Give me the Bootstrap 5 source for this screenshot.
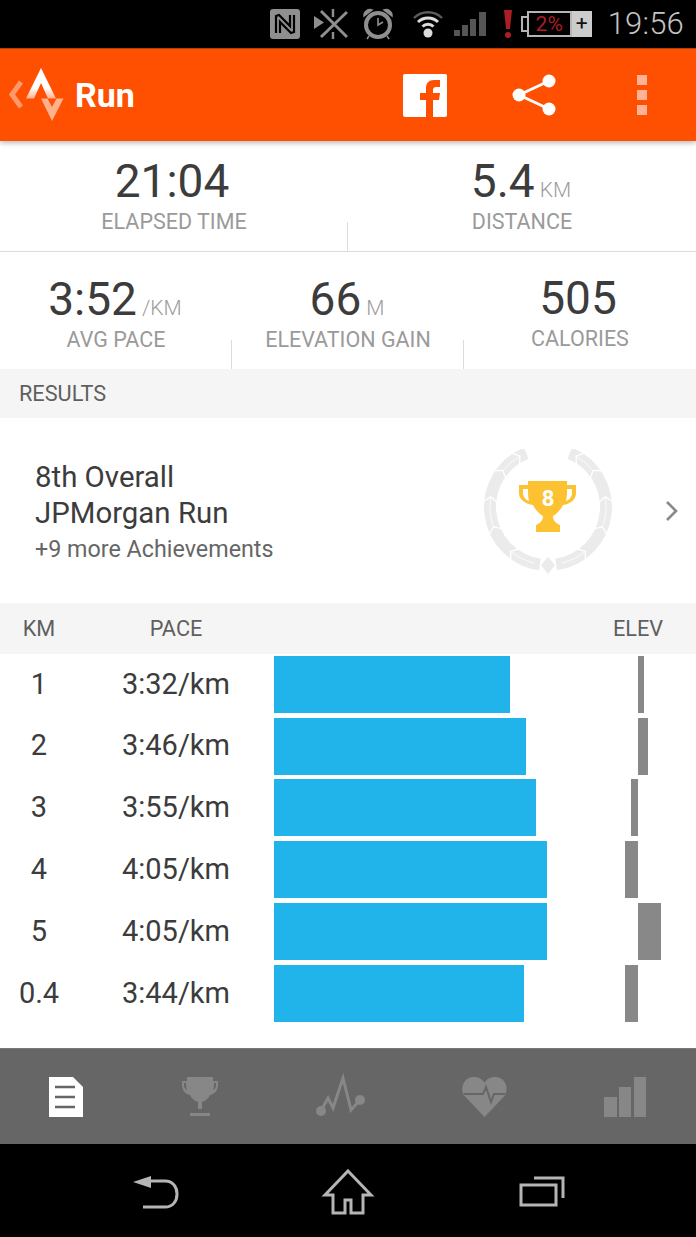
<!DOCTYPE html>
<html lang="en">
<head>
<meta charset="utf-8">
<title>Run</title>
<link rel="stylesheet" href="https://cdn.jsdelivr.net/npm/bootstrap@5.3.0/dist/css/bootstrap.min.css">
<style>
html,body{margin:0;background:#fff}
body{width:696px;height:1237px;overflow:hidden;font-family:Roboto,"Liberation Sans",sans-serif;color:#3c3c3c}
svg{display:block;flex:none}
.sbar{height:48px;background:#000;padding-right:12px}
.si-n{margin-right:14px}.si-bt{margin-right:14px}.si-al{margin-right:19px}.si-wf{margin-right:11px}.si-sg{margin-right:17px}.si-ex{margin-right:8px}
.batt-box{width:45px;height:26px;border:2px solid #b5b5b5;color:#a91f24;font-size:21px;line-height:22px}
.batt-tip{width:6px;height:16px;border:2px solid #b5b5b5;border-right:0}
.batt-plus{width:20px;height:26px;background:#ccc;color:#111;font-size:21px;line-height:25px}
.sb-time{font-size:31px;font-weight:300;color:#c4c4c4;margin-left:16px;line-height:48px;letter-spacing:.2px}
.appbar{height:93px;background:#fe5000;border-top:1px solid #b04008;box-shadow:0 2px 5px rgba(0,0,0,.28);position:relative;z-index:2}
.logo{margin-left:6px}
.app-title{font-size:34px;font-weight:700;color:#fff;margin-left:3px;line-height:1}
.ab-share{margin-left:65px}
.ab-dots{margin-left:79px;margin-right:49px}
.stat-a{height:110px}
.stat-b{height:118px;border-top:1px solid #dcdcdc}
.cell{position:relative;text-align:center}
.third{width:232px}
.cell-tick::after{content:"";position:absolute;right:0;bottom:0;width:1px;height:29px;background:#dcdcdc}
.val{font-size:46px;line-height:54px;height:54px;color:#3c3c3c;padding-right:4px}
.unit{font-size:21px;line-height:1;color:#9c9c9c;font-weight:300;margin-left:5px;margin-right:-2px}
.lbl{font-size:21.5px;line-height:24px;color:#9a9a9a;margin-top:2px}
.stat-a .cell{padding-top:13px}
.stat-b .cell{padding-top:20px}
.stat-b .cell-cal{padding-top:19px}
.sect{height:49px;background:#f5f5f5;color:#5f5f5f;font-size:21.7px;padding:2px 0 0 19px}
.achv{height:185px;padding-left:35px}
.achv-copy{padding-top:4px}
.achv-t{font-size:29.4px;line-height:36px;color:#3c3c3c}
.achv-s{font-size:23.3px;line-height:36px;color:#666}
.wreath{margin-top:3px}
.achv-go{margin-left:53px;margin-right:17px}
.thead{height:51px;background:#f5f5f5;color:#5f5f5f;font-size:21.7px;padding-top:2px}
.c-km{width:78px;text-align:center;flex:none}
.c-pace{width:196px;text-align:center;flex:none}
.c-track{width:336px;flex:none}
.c-elev{width:56px;flex:none}
.laps{padding-top:1px;height:394px}
.lap{height:61.8px;font-size:29px;color:#3c3c3c;padding-bottom:3px}
.pbar{height:57px;background:#20b4ea}
.ebar{height:57px;background:#888}
.half{width:28px;flex:none}
.tabs{height:96px;background:#666;border-top:1px solid #787878}
.navb{height:93px;background:#000}
</style>
</head>
<body>
<div class="sbar d-flex align-items-center justify-content-end">
  <svg class="si-n" width="30" height="30" viewBox="0 0 30 30"><rect width="30" height="30" rx="3" fill="#8f8f8f"/><path d="M6 24V7l3-1 11 11V6M24 6v17l-3 1L10 13v11" fill="none" stroke="#000" stroke-width="2.2"/></svg>
  <svg class="si-bt" width="34" height="30" viewBox="0 0 34 30"><path d="M0 7v13l10-6.500z" fill="#8f8f8f"/><path d="M7 2l26 26M33 3L7 28" stroke="#8f8f8f" stroke-width="3"/><path d="M19 0v8M19 23v7" stroke="#8f8f8f" stroke-width="2.400"/></svg>
  <svg class="si-al" width="32" height="32" viewBox="0 0 32 32"><circle cx="16" cy="17" r="12" fill="none" stroke="#8f8f8f" stroke-width="4"/><path d="M16 10v7l5-3" fill="none" stroke="#8f8f8f" stroke-width="1.600"/><path d="M2 8a6 6 0 0 1 8-6zM30 8a6 6 0 0 0-8-6zM7 28l-2 3M25 28l2 3" fill="#8f8f8f" stroke="#8f8f8f" stroke-width="1.500"/></svg>
  <svg class="si-wf" width="30" height="28" viewBox="0 0 30 28"><path d="M1 8a20 20 0 0 1 28 0" fill="none" stroke="#5d5d5d" stroke-width="2.400"/><path d="M5 12a14.500 14.500 0 0 1 20 0" fill="none" stroke="#dcdcdc" stroke-width="3"/><path d="M9.500 16.500a8 8 0 0 1 11 0" fill="none" stroke="#dcdcdc" stroke-width="3"/><circle cx="15" cy="23" r="4.500" fill="#dcdcdc"/></svg>
  <svg class="si-sg" width="32" height="26" viewBox="0 0 32 26"><path d="M0 19h6v6H0zM8 14h6v11H8zM16 8h6v17h-6zM25 1h7v24h-7z" fill="#555"/></svg>
  <svg class="si-ex" width="10" height="28" viewBox="0 0 10 28"><path d="M1 0h8l-2 19H3z" fill="#a91f24"/><circle cx="5" cy="25" r="3" fill="#a91f24"/></svg>
  <div class="batt-tip"></div>
  <div class="batt-box text-center">2%</div>
  <div class="batt-plus text-center">+</div>
  <div class="sb-time">19:56</div>
</div>

<div class="appbar d-flex align-items-center">
  <svg class="logo" width="66" height="60" viewBox="0 0 66 60"><defs><linearGradient id="fade" x1="0" y1="0" x2="0" y2="1"><stop offset="0" stop-color="#fff"/><stop offset=".65" stop-color="#fff"/><stop offset="1" stop-color="#fff" stop-opacity=".55"/></linearGradient></defs><path d="M15 17L6 29.500 15 42" fill="none" stroke="#fff" stroke-opacity=".42" stroke-width="5"/><path d="M35 3L50 33.500H42L35 18 28 33.500H20z" fill="url(#fade)"/><path d="M35 33.500H41.500L46 42 50.500 33.500H57.500L46 56z" fill="#fff" fill-opacity=".55"/></svg>
  <div class="app-title">Run</div>
  <div class="d-flex align-items-center ms-auto">
    <svg width="44" height="43" viewBox="0 0 44 43"><rect width="44" height="43" rx="2" fill="#fff"/><path d="M23 43V26h-6v-7h6v-5c0-5 3-8 8-8h6v7h-4c-2 0-3 1-3 3v3h7l-1 7h-6v17z" fill="#fe5000"/></svg>
    <svg class="ab-share" width="46" height="44" viewBox="0 0 46 44"><path d="M7 22L37 8M7 22l30 14" stroke="#fff" stroke-width="3"/><circle cx="7" cy="22" r="6.500" fill="#fff"/><circle cx="37" cy="8" r="6.500" fill="#fff"/><circle cx="37" cy="36" r="6.500" fill="#fff"/></svg>
    <svg class="ab-dots" width="10" height="40" viewBox="0 0 10 40"><path d="M0 0h10v10H0zM0 15h10v10H0zM0 30h10v10H0z" fill="#ffb396"/></svg>
  </div>
</div>

<div class="row g-0 stat-a">
  <div class="col-6 cell cell-tick"><div class="val">21:04</div><div class="lbl">ELAPSED TIME</div></div>
  <div class="col-6 cell"><div class="val">5.4<span class="unit">KM</span></div><div class="lbl">DISTANCE</div></div>
</div>
<div class="d-flex stat-b">
  <div class="cell cell-tick third"><div class="val">3:52<span class="unit">/KM</span></div><div class="lbl">AVG PACE</div></div>
  <div class="cell cell-tick third"><div class="val">66<span class="unit">M</span></div><div class="lbl">ELEVATION GAIN</div></div>
  <div class="cell cell-cal third"><div class="val">505</div><div class="lbl">CALORIES</div></div>
</div>

<div class="sect d-flex align-items-center">RESULTS</div>

<div class="achv d-flex align-items-center">
  <div class="flex-grow-1 achv-copy">
    <div class="achv-t">8th Overall</div>
    <div class="achv-t">JPMorgan Run</div>
    <div class="achv-s">+9 more Achievements</div>
  </div>
  <svg class="wreath" width="128" height="126" viewBox="0 0 128 126">
    <defs><g id="wr">
      <path d="M42.300 4.200A58 58 0 0 0 55.900 115.400" fill="none" stroke="#ebebeb" stroke-width="12"/>
      <path d="M35.500 15.700L35.900 7.300 27.700 4.100M21.700 29.500L18.900 21.500 10.100 21.700M13.200 53.600L6.900 47.900-.7 52.300M17.800 79.600L9.500 77.800 5.100 85.500M34.700 99.800L26.700 102.400 26.700 111.200" fill="none" stroke="#fff" stroke-width="1.300"/>
      <path d="M35.900 7.300A58 58 0 0 0 18.900 21.500M6.900 47.900A58 58 0 0 0 9.500 77.800M26.700 102.400A58 58 0 0 0 50 114" fill="none" stroke="#fff" stroke-width=".8"/>
    </g></defs>
    <use href="#wr"/><use href="#wr" transform="translate(128 0) scale(-1 1)"/>
    <path d="M64 108l7 8-7 9-7-9z" fill="#ebebeb"/>
    <path d="M44 32H83V36H92V44C92 51 86 55 79 56C76 62 72 65 69 67C69 71 71 74 76 76V83H52V76C57 74 59 71 59 67C56 65 52 62 49 56C42 55 35 51 35 44V36H44ZM39 40V44C39 48 42 51 45 52C44 48 44 44 44 40ZM88 40V44C88 48 85 51 82 52C83 48 83 44 83 40Z" fill="#fdc231" fill-rule="evenodd"/>
    <text x="64" y="57" text-anchor="middle" font-family="Roboto,sans-serif" font-weight="700" font-size="22" fill="#fff">8</text>
  </svg>
  <svg class="achv-go" width="14" height="22" viewBox="0 0 14 22"><path d="M2 2l9 9-9 9" fill="none" stroke="#8a8a8a" stroke-width="2.600"/></svg>
</div>

<div class="thead d-flex align-items-center">
  <div class="c-km">KM</div><div class="c-pace">PACE</div><div class="c-track"></div><div class="c-elev text-center">ELEV</div>
</div>

<div class="laps">
  <div class="lap d-flex align-items-center"><div class="c-km">1</div><div class="c-pace">3:32/km</div><div class="c-track"><div class="pbar" style="width:236px"></div></div><div class="c-elev d-flex"><div class="half"></div><div class="ebar" style="width:6px"></div></div></div>
  <div class="lap d-flex align-items-center"><div class="c-km">2</div><div class="c-pace">3:46/km</div><div class="c-track"><div class="pbar" style="width:252px"></div></div><div class="c-elev d-flex"><div class="half"></div><div class="ebar" style="width:10px"></div></div></div>
  <div class="lap d-flex align-items-center"><div class="c-km">3</div><div class="c-pace">3:55/km</div><div class="c-track"><div class="pbar" style="width:262px"></div></div><div class="c-elev d-flex"><div class="half d-flex justify-content-end"><div class="ebar" style="width:7px"></div></div></div></div>
  <div class="lap d-flex align-items-center"><div class="c-km">4</div><div class="c-pace">4:05/km</div><div class="c-track"><div class="pbar" style="width:273px"></div></div><div class="c-elev d-flex"><div class="half d-flex justify-content-end"><div class="ebar" style="width:13px"></div></div></div></div>
  <div class="lap d-flex align-items-center"><div class="c-km">5</div><div class="c-pace">4:05/km</div><div class="c-track"><div class="pbar" style="width:273px"></div></div><div class="c-elev d-flex"><div class="half"></div><div class="ebar" style="width:23px"></div></div></div>
  <div class="lap d-flex align-items-center"><div class="c-km">0.4</div><div class="c-pace">3:44/km</div><div class="c-track"><div class="pbar" style="width:250px"></div></div><div class="c-elev d-flex"><div class="half d-flex justify-content-end"><div class="ebar" style="width:13px"></div></div></div></div>
</div>

<div class="tabs">
  <svg width="696" height="95" viewBox="0 1049 696 95">
    <path d="M49 1077h24l10 10v30H49z" fill="#fff"/><path d="M55 1087h20M55 1097h20M55 1107h20" stroke="#666" stroke-width="2.600"/>
    <path d="M187 1077h26v4h5v4c0 5-3 9-8 10-2 4-5 6-8 7v7h-4v-7c-3-1-6-3-8-7-5-1-8-5-8-10v-4h5zM184 1083v2c0 2 1 4 3 5-1-2-1-5-1-7zM216 1083v2c0 2-1 4-3 5 1-2 1-5 1-7z" fill="#878787" fill-rule="evenodd"/><path d="M190 1113h20v3h-20z" fill="#878787"/>
    <path d="M321 1111l7-13 5 10 10-30 8 32 9-10" fill="none" stroke="#878787" stroke-width="3"/><circle cx="321" cy="1111" r="5" fill="#878787"/><circle cx="360" cy="1100" r="5" fill="#878787"/>
    <path d="M484.500 1117l-20-21c-5-7-1-19 9-19 5 0 9 2 11 6 2-4 6-6 11-6 10 0 14 12 9 19z" fill="#878787"/><path d="M464 1094h19l3-7 5 15 3-8h11" fill="none" stroke="#666" stroke-width="2"/>
    <path d="M604 1097h13v20h-13zM619 1087h12v30h-12zM634 1077h12v40h-12z" fill="#878787"/>
  </svg>
</div>
<div class="navb">
  <svg width="696" height="93" viewBox="0 1144 696 93">
    <path d="M133 1182l18-6v12z" fill="#b5b5b5"/><path d="M150 1181h15c8 0 12 6 12 13s-4 13-12 13h-22" fill="none" stroke="#b5b5b5" stroke-width="3"/>
    <path d="M348 1171l23 24h-8v18h-12v-13h-6v13h-12v-18h-8z" fill="none" stroke="#b5b5b5" stroke-width="3"/>
    <path d="M521 1185h35v20h-35zM534 1178h29v20" fill="none" stroke="#b5b5b5" stroke-width="3"/>
  </svg>
</div>
<script src="https://cdn.jsdelivr.net/npm/bootstrap@5.3.0/dist/js/bootstrap.bundle.min.js"></script>
</body>
</html>
